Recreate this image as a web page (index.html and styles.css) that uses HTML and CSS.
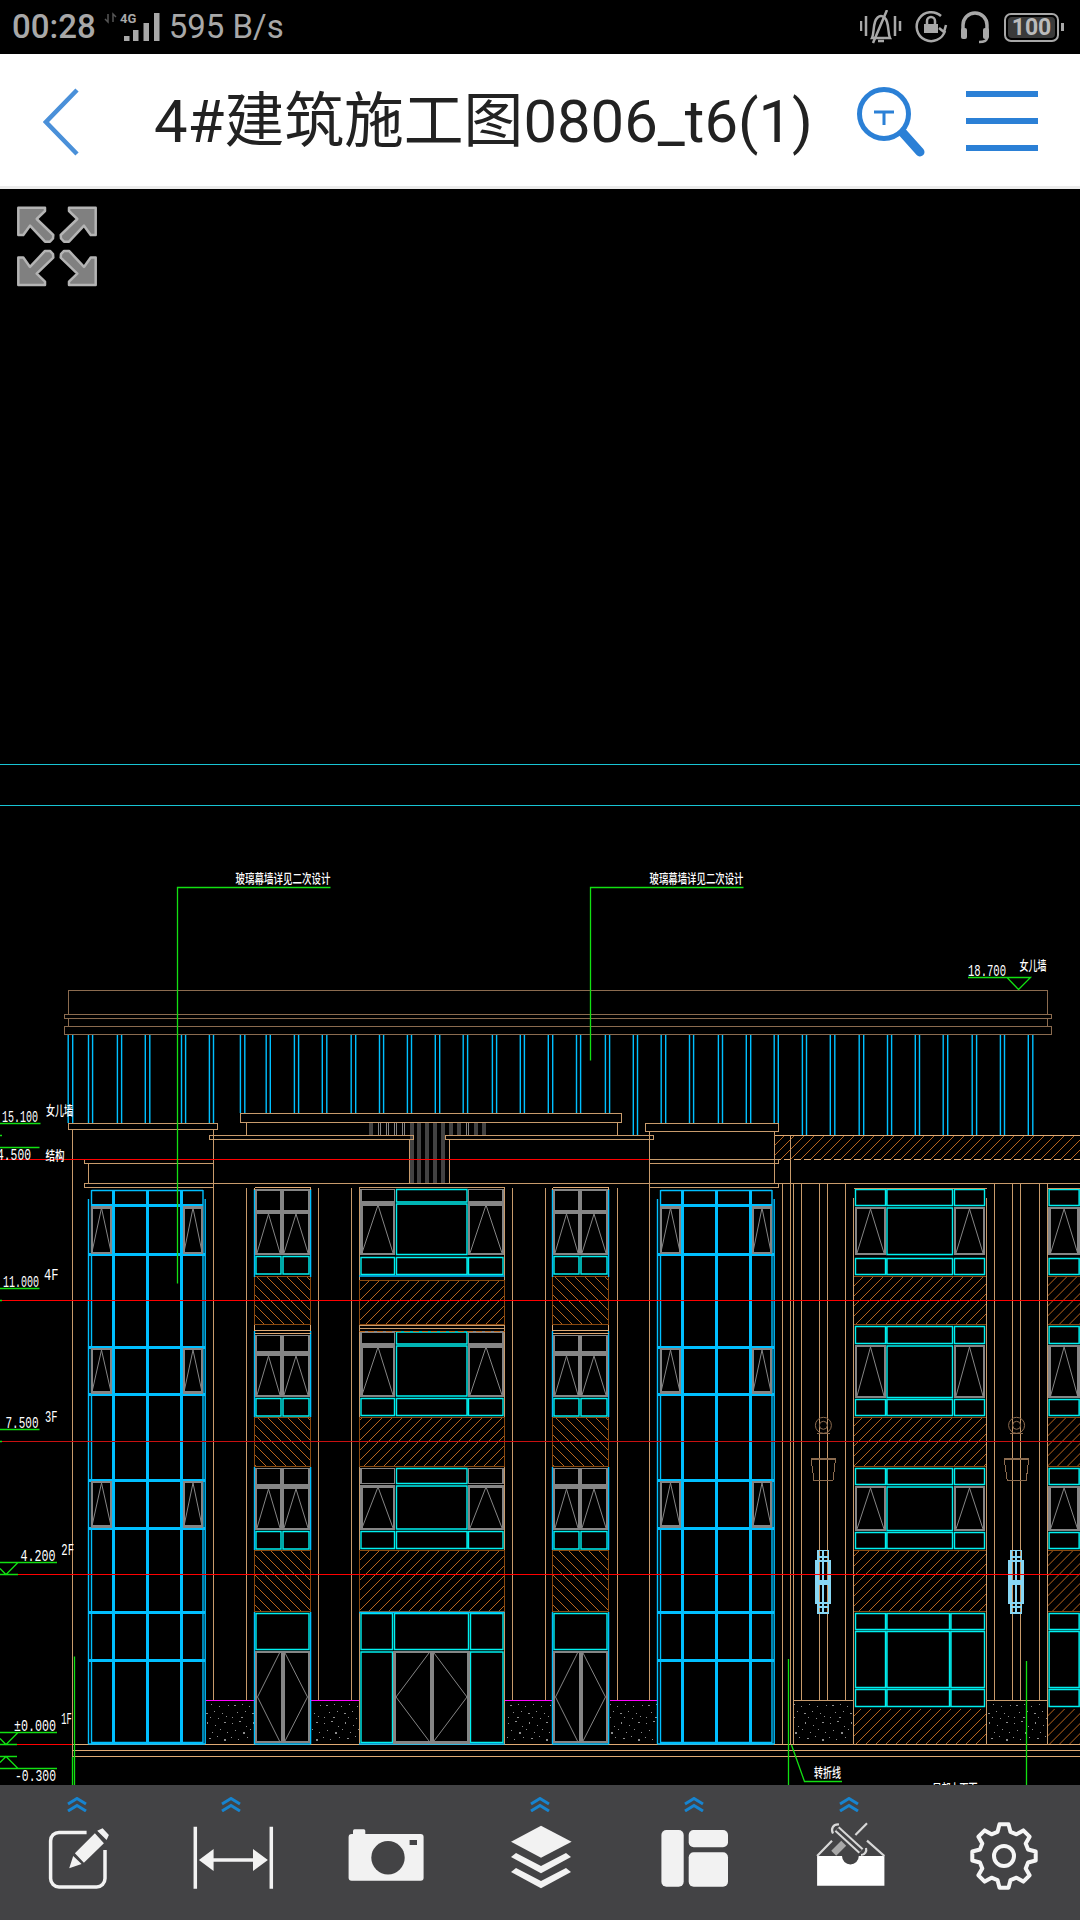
FILE: index.html
```html
<!DOCTYPE html>
<html>
<head>
	<meta charset="utf-8">
	<meta name="viewport" content="width=device-width, initial-scale=1">
	<title>CAD Viewer</title>
	<link rel="stylesheet" href="styles.css">
</head>
<body>
<div class="screen">

	<div class="status-bar">
		<span class="time">00:28</span>
		<svg class="signal" width="56" height="30" viewBox="0 0 56 30">
			<path class="dim" d="M4 2V10L1 7M9 10V2L12 5"/>
			<text x="16" y="11">4G</text>
			<rect x="20" y="24" width="5.5" height="5"/>
			<rect x="29" y="18" width="5.5" height="11"/>
			<rect x="39.5" y="11" width="5.5" height="18"/>
			<rect x="50" y="1" width="5.5" height="28"/>
		</svg>
		<span class="speed">595 B/s</span>
		<div class="status-icons">
			<svg class="s-icon" width="42" height="34" viewBox="0 0 42 34">
				<path d="M1 11V21M6 6V26M35 6V26M40 11V21"/>
				<path d="M12 28C14 24 13 18 15 12C16 8 19 6 21 6C23 6 26 8 27 12C29 18 28 24 30 28Z"/>
				<path d="M27 0L13 33M18 31H24"/>
			</svg>
			<svg class="s-icon" width="34" height="34" viewBox="0 0 34 34">
				<path d="M27 6A14.5 14.5 0 1 0 31 21"/>
				<path d="M32 15L30 22L25 18"/>
				<rect class="solid" x="10" y="14" width="14" height="9"/>
				<path d="M13 14V11A4 4 0 0 1 21 11V14"/>
			</svg>
			<svg class="s-icon" width="30" height="34" viewBox="0 0 30 34">
				<path class="thick" d="M3 20V15A12 12 0 0 1 27 15V20"/>
				<rect class="solid" x="1" y="18" width="6" height="11" rx="2"/>
				<rect class="solid" x="23" y="18" width="6" height="11" rx="2"/>
				<path d="M27 28Q27 32 19 32"/>
			</svg>
			<div class="battery">
				<div class="battery-body"><span>100</span></div>
				<div class="battery-nub"></div>
			</div>
		</div>
	</div>

	<div class="title-bar">
		<svg class="back" width="36" height="68" viewBox="0 0 36 68">
			<path d="M34 2L3 34L34 66"/>
		</svg>
		<p class="title">4#建筑施工图0806_t6(1)</p>
		<svg class="search" width="70" height="72" viewBox="0 0 70 72">
			<circle cx="28" cy="28" r="24.5"/>
			<path class="t" d="M18 26H38M28 26V39"/>
			<path class="handle" d="M47 47L64 66"/>
		</svg>
		<div class="menu"><span></span><span></span><span></span></div>
	</div>

	<div class="drawing">
		<svg class="cad" width="1080" height="1596" viewBox="0 189 1080 1596">
			<defs>
				<pattern id="hatch-f" width="10" height="10" patternUnits="userSpaceOnUse">
					<path d="M0 10L10 0" stroke="#b8641c"/>
				</pattern>
				<pattern id="hatch-b" width="10" height="10" patternUnits="userSpaceOnUse">
					<path d="M0 0L10 10" stroke="#b8641c"/>
				</pattern>
				<pattern id="concrete" width="46" height="40" patternUnits="userSpaceOnUse">
					<path class="speck" d="M2 3h1v1h-1zM9 1h2v1h-2zM16 6h1v1h-1zM23 2h1v2h-1zM31 5h1v1h-1zM40 2h2v1h-2zM5 10h1v1h-1zM13 12h2v2h-2zM20 9h1v1h-1zM28 12h1v1h-1zM36 9h1v1h-1zM43 12h1v1h-1zM1 17h1v1h-1zM8 19h1v1h-1zM17 17h1v1h-1zM25 18h2v1h-2zM33 16h1v1h-1zM40 19h2v2h-2zM4 25h2v1h-2zM12 24h1v1h-1zM19 26h1v1h-1zM27 24h1v1h-1zM35 26h1v1h-1zM44 25h1v1h-1zM7 32h1v1h-1zM15 31h1v1h-1zM22 33h2v1h-2zM30 31h1v1h-1zM38 33h1v1h-1zM2 37h1v1h-1zM11 37h2v1h-2zM26 37h1v1h-1zM34 38h1v1h-1zM42 36h1v1h-1z"/>
				</pattern>

				<!-- curtain wall, left one is the base, right one is moved by 569 -->
				<g id="curtain">
					<path class="blue-thin" d="M88.5 1199V1744M91.5 1190V1744M203 1190V1744M205.2 1199V1744M91.5 1190.5H203M91.5 1742.5H203M88.5 1744H205"/>
					<path class="blue-thick" d="M113.3 1190V1744M147.4 1190V1744M181.5 1190V1744M91 1205.5H203M89 1254.5H205M89 1347.5H205M89 1394.5H205M89 1480.5H205M89 1528H205M89 1612H205M89 1660.5H205"/>
					<path class="grey-thick" d="M92 1207.5H111V1253H92ZM184 1207.5H202V1253H184ZM92 1349H111V1392.5H92ZM184 1349H202V1392.5H184ZM92 1482H111V1526.5H92ZM184 1482H202V1526.5H184Z"/>
					<path class="grey-thin" d="M92 1252L101.5 1208L111 1252M184 1252L193 1208L202 1252M92 1392L101.5 1350L111 1392M184 1392L193 1350L202 1392M92 1526L101.5 1483L111 1526M184 1526L193 1483L202 1526"/>
				</g>

				<!-- narrow window, one floor, y as on 3F -->
				<g id="narrow">
					<path class="cyan" d="M256 1398.5H281V1416H256ZM283 1398.5H309V1416H283Z"/>
					<path class="grey-thick" d="M256 1354.5H281V1396H256ZM283 1354.5H309V1396H283Z"/>
					<path class="grey-thin" d="M257 1395L268.5 1356L280 1395M284 1395L296 1356L308 1395"/>
				</g>
				<g id="narrow-col">
					<rect class="brown" x="254.5" y="1276.5" width="56" height="48" fill="url(#hatch-b)"/>
					<rect class="brown" x="254.5" y="1417.5" width="56" height="49" fill="url(#hatch-b)"/>
					<rect class="brown" x="254.5" y="1550.5" width="56" height="61" fill="url(#hatch-b)"/>
					<path class="blue-thin" d="M254.5 1189V1277M310.6 1189V1277M254.5 1331V1417M310.6 1331V1417M254.5 1467V1550M310.6 1467V1550M254.5 1612V1744M310.6 1612V1744M254.5 1744H310.6"/>
					<path class="grey-mid" d="M256 1190H281V1211H256ZM283 1190H309V1211H283ZM256 1335.5H281V1352H256ZM283 1335.5H309V1352H283ZM256 1468.5H281V1485H256ZM283 1468.5H309V1485H283Z"/>
					<use href="#narrow" y="-142"/>
					<use href="#narrow"/>
					<use href="#narrow" y="133"/>
					<path class="cyan" d="M256 1613.5H309V1649.5H256Z"/>
					<path class="grey-thick" d="M283.5 1652H309V1742H283.5Z"/>
					<path class="grey-mid" d="M256 1652H281.5V1742H256Z"/>
					<path class="grey-thin" d="M279.5 1653L257.5 1697L279.5 1741M285 1653L307.5 1697L285 1741"/>
					<path class="tan-lt" d="M254.5 1187.5H310.6V1190M254.5 1187.5V1190M254.5 1325V1330H310.6V1325M254.5 1333H310.6"/>
				</g>

				<!-- wide window on the right side of the building -->
				<g id="wide-right">
					<rect class="brown" x="853.5" y="1276.5" width="133" height="48" fill="url(#hatch-f)"/>
					<rect class="brown" x="853.5" y="1417.5" width="133" height="49" fill="url(#hatch-f)"/>
					<rect class="brown" x="853.5" y="1550.5" width="133" height="61" fill="url(#hatch-f)"/>
					<rect x="853.5" y="1708.5" width="133" height="35.5" fill="url(#hatch-f)"/>
					<path class="cyan" d="M855.5 1189.5H885.5V1205.5H855.5ZM887 1189.5H952.5V1205.5H887ZM954.5 1189.5H984.5V1205.5H954.5ZM887 1208V1254.5H952.5V1208ZM855.5 1258.5H885.5V1274.5H855.5ZM887 1258.5H952.5V1274.5H887ZM954.5 1258.5H984.5V1274.5H954.5Z"/>
					<path class="cyan" d="M855.5 1326.5H885.5V1343.5H855.5ZM887 1326.5H952.5V1343.5H887ZM954.5 1326.5H984.5V1343.5H954.5ZM887 1346H952.5V1397.5H887ZM855.5 1399.5H885.5V1415.5H855.5ZM887 1399.5H952.5V1415.5H887ZM954.5 1399.5H984.5V1415.5H954.5Z"/>
					<path class="cyan" d="M855.5 1468.5H885.5V1484.5H855.5ZM887 1468.5H952.5V1484.5H887ZM954.5 1468.5H984.5V1484.5H954.5ZM887 1487H952.5V1530.5H887ZM855.5 1532.5H885.5V1548.5H855.5ZM887 1532.5H952.5V1548.5H887ZM954.5 1532.5H984.5V1548.5H954.5Z"/>
					<path class="cyan" d="M855.5 1613.5H885.5V1629.5H855.5ZM887 1613.5H949.5V1629.5H887ZM951 1613.5H984.5V1629.5H951ZM855.5 1631.5H885.5V1687.5H855.5ZM887 1631.5H949.5V1687.5H887ZM951 1631.5H984.5V1687.5H951ZM855.5 1689.5H885.5V1706.5H855.5ZM887 1689.5H949.5V1706.5H887ZM951 1689.5H984.5V1706.5H951Z"/>
					<path class="grey-thick" d="M856 1208H885V1254H856ZM955 1208H984V1254H955ZM856 1346H885V1397H856ZM955 1346H984V1397H955ZM856 1487H885V1530H856ZM955 1487H984V1530H955Z"/>
					<path class="grey-thin" d="M857 1253L870.5 1209L884 1253M956 1253L969.5 1209L983 1253M857 1396L870.5 1347L884 1396M956 1396L969.5 1347L983 1396M857 1529L870.5 1488L884 1529M956 1529L969.5 1488L983 1529"/>
					<path class="tan" d="M853.5 1198V1745M986.5 1198V1745M853.5 1188.5H986.5"/>
				</g>

				<g id="wall-lamp">
					<circle class="brown-l" cx="823.4" cy="1425.3" r="8"/>
					<circle class="brown-l" cx="823.4" cy="1425.3" r="4"/>
					<path class="brown-l" d="M817 1433.5H830"/>
					<path class="brown-l thick-l" d="M810.5 1459H836"/>
					<path class="brown-l" d="M811 1459L814 1480.5H833L835.5 1459"/>
				</g>
				<g id="lantern">
					<path class="lantern" d="M818 1550.5H828.5V1613H818ZM818 1557H828.5M823 1550V1613M816 1561H830V1603H816ZM818 1607H828.5"/>
					<rect x="815.5" y="1579.5" width="15" height="5.5" fill="#87d7f5"/>
				</g>
			</defs>

			<!-- hatching under the right half of the roof -->
			<rect x="774" y="1135.5" width="310" height="24" fill="url(#hatch-f)"/>
			<path class="tan-lt" d="M774 1135.5H1080"/>
			<path class="tan-lt" stroke-dasharray="7 3" d="M774 1159.5H1080"/>

			<!-- glass strips above the cornice -->
			<path class="blue-thin" d="M68.2 1034V1123M72.7 1034V1123M88.5 1034V1123M92.6 1034V1123M117.4 1034V1123M121.6 1034V1123M145.3 1034V1123M149.8 1034V1123M181.5 1034V1123M185.6 1034V1123M209.4 1034V1123M213.5 1034V1123M240.4 1034V1113M244.8 1034V1113M266.2 1034V1113M270.3 1034V1113M294.4 1034V1113M298.6 1034V1113M322.3 1034V1113M326.8 1034V1113M351.2 1034V1113M355.7 1034V1113M379.5 1034V1113M383.6 1034V1113M407.4 1034V1113M411.5 1034V1113M435.3 1034V1113M439.7 1034V1113M463.2 1034V1113M467.6 1034V1113M492.4 1034V1113M496.6 1034V1113M520.3 1034V1113M524.4 1034V1113M548.3 1034V1113M552.7 1034V1113M576.5 1034V1113M580.6 1034V1113M605.4 1034V1113M609.6 1034V1113M633.3 1034V1135M637.5 1034V1135M661.2 1034V1123M665.7 1034V1123M689.5 1034V1123M693.6 1034V1123M718.4 1034V1123M722.5 1034V1123M746.3 1034V1123M750.7 1034V1123M774.2 1034V1123M778.3 1034V1123M802.4 1034V1135M806.5 1034V1135M830.3 1034V1135M834.8 1034V1135M859.2 1034V1135M863.7 1034V1135M887.5 1034V1135M891.6 1034V1135M915.3 1034V1135M919.5 1034V1135M943.2 1034V1135M947.7 1034V1135M972.2 1034V1135M976.6 1034V1135M1000.4 1034V1135M1004.5 1034V1135M1028.3 1034V1135M1032.8 1034V1135"/>

			<!-- parapet and cornice -->
			<path class="brown-l" d="M68.5 1014V990.5H1047.5V1014M64.5 1014H1051.5V1018.5H64.5ZM68.5 1018.5V1026.5M1047.5 1018.5V1026.5M64.5 1026.5H1051.5V1034.5H64.5Z"/>

			<!-- centre grille -->
			<path class="grey-thin" d="M370 1122V1135M372 1122V1135M378.5 1122V1135M380.5 1122V1135M386.5 1122V1135M388.5 1122V1135M394.5 1122V1135M396.5 1122V1135M402.5 1122V1135M404.5 1122V1135M411 1122V1183M413 1122V1183M418 1122V1183M420 1122V1183M426 1122V1183M428 1122V1183M434 1122V1183M436 1122V1183M442 1122V1183M444 1122V1183M450 1122V1135M452 1122V1135M458 1122V1135M460 1122V1135M466.5 1122V1135M468.5 1122V1135M475 1122V1135M477 1122V1135M483 1122V1135M485 1122V1135"/>

			<!-- main lines of the elevation -->
			<path class="tan" d="M68.5 1123.5H217.5V1129.5H68.5ZM240.5 1113.5H621.5V1122H240.5ZM246.5 1122V1135M617.5 1122V1135M209.5 1135.5H413.5V1139.5H209.5ZM445 1135.5H653.5V1139.5H445ZM409.5 1139.5V1183.5M449.5 1139.5V1183.5M645.5 1123.5H778.5V1131.5H645.5ZM84.5 1159.5H213V1163.5H84.5ZM88.5 1163.5V1183.5M84.5 1183.5H213V1187.5H84.5ZM213 1183.5H1080M649.5 1159.5H778.5V1163.5H649.5ZM649.5 1187.5H778.5V1183.5M649.5 1131.5V1700M774.5 1131.5V1183.5M790.5 1135.5V1183.5"/>
			<path class="tan" d="M72.5 1129.5V1757M213.5 1129.5V1700.5M246.5 1188V1700.5M318.5 1188V1700.5M351.5 1188V1700.5M359.5 1188V1745M504.5 1188V1745M512.5 1188V1700.5M545.5 1188V1700.5M617.5 1188V1700.5M782.5 1183.5V1744M790.5 1183.5V1744M793.5 1183.5V1744M801.5 1183.5V1700.5M819.5 1183.5V1700.5M827.5 1183.5V1700.5M845.5 1183.5V1700.5M994.5 1183.5V1700.5M1012.5 1183.5V1700.5M1020.5 1183.5V1700.5M1039.5 1183.5V1700.5M793.5 1700.5H853.5M986.5 1700.5H1047M1047.5 1183.5V1744"/>
			<path class="tan-lt" d="M72.5 1744.5H1080M72.5 1750.5H1080M72.5 1756.5H1080"/>

			<!-- stone base -->
			<rect x="206" y="1701" width="48.5" height="43" fill="url(#concrete)"/>
			<rect x="311.5" y="1701" width="48" height="43" fill="url(#concrete)"/>
			<rect x="505" y="1701" width="47.5" height="43" fill="url(#concrete)"/>
			<rect x="610" y="1701" width="47" height="43" fill="url(#concrete)"/>
			<rect x="794" y="1701" width="60" height="43" fill="url(#concrete)"/>
			<rect x="987" y="1701" width="60" height="43" fill="url(#concrete)"/>
			<path class="magenta" d="M206 1700.5H254.5M311 1700.5H359M505 1700.5H552.5M610 1700.5H657"/>

			<use href="#curtain"/>
			<use href="#curtain" x="569"/>
			<use href="#narrow-col"/>
			<use href="#narrow-col" x="298"/>

			<!-- wide window left of centre -->
			<rect class="brown" x="359.5" y="1280.5" width="145" height="44" fill="url(#hatch-f)"/>
			<rect class="brown" x="359.5" y="1417.5" width="145" height="49" fill="url(#hatch-f)"/>
			<rect class="brown" x="359.5" y="1550.5" width="145" height="61" fill="url(#hatch-f)"/>
			<path class="cyan" d="M396.5 1189.5H467V1202H396.5ZM396.5 1204V1254.5H467V1204ZM361 1257.5H394.5V1274.5H361ZM396.5 1257.5H467V1274.5H396.5ZM468.5 1257.5H503V1274.5H468.5ZM396.5 1332H467V1344H396.5ZM396.5 1346H467V1396H396.5ZM361 1398.5H394.5V1415.5H361ZM396.5 1398.5H467V1415.5H396.5ZM468.5 1398.5H503V1415.5H468.5ZM396.5 1468.5H467V1483.5H396.5ZM396.5 1486H467V1529H396.5ZM361 1531.5H394.5V1548.5H361ZM396.5 1531.5H467V1548.5H396.5ZM468.5 1531.5H503V1548.5H468.5ZM361 1613.5H392.5V1649.5H361ZM394.5 1613.5H468.5V1649.5H394.5ZM470.5 1613.5H503V1649.5H470.5ZM361 1652H392.5V1742.5H361ZM470.5 1652H503V1742.5H470.5Z"/>
			<path class="blue-thin" d="M359 1744H504.5M359 1276H504.5M359 1612.5H504.5"/>
			<path class="grey-mid" d="M361 1189.5H394.5V1202H361ZM468.5 1189.5H503V1202H468.5ZM361 1332H394.5V1344H361ZM468.5 1332H503V1344H468.5ZM361 1468.5H394.5V1483.5H361ZM468.5 1468.5H503V1483.5H468.5Z"/>
			<path class="grey-thick" d="M361.5 1204.5H394V1254H361.5ZM469 1204.5H503V1254H469ZM361.5 1346.5H394V1396H361.5ZM469 1346.5H503V1396H469ZM361.5 1486.5H394V1529H361.5ZM469 1486.5H503V1529H469ZM394.5 1652H431V1742.5H394.5ZM432.5 1652H468.5V1742.5H432.5Z"/>
			<path class="grey-thin" d="M362 1253L378 1205L393 1253M470 1253L486 1205L502 1253M362 1395L378 1347L393 1395M470 1395L486 1347L502 1395M362 1528L378 1487L393 1528M470 1528L486 1487L502 1528M429 1653L396 1697L429 1741M434 1653L467 1697L434 1741"/>
			<path class="tan" d="M359 1325.5H504.5M359 1328.5H504.5M359 1187.5H504.5"/>
			<path class="orange" stroke-dasharray="6 3" d="M359 1331H504.5"/>

			<use href="#wide-right"/>
			<use href="#wide-right" x="193.6"/>

			<use href="#wall-lamp"/>
			<use href="#wall-lamp" x="193.2"/>
			<use href="#lantern"/>
			<use href="#lantern" x="193.2"/>

			<!-- axis lines -->
			<path class="aqua" d="M0 764.5H1080M0 805.5H1080"/>
			<path class="red" d="M0 1159.5H649M0 1300.5H1080M0 1574.5H1080M0 1744.5H72"/>
			<path class="red-dim" d="M0 1441.5H1080"/>

			<!-- leaders and level marks -->
			<path class="green" d="M177.5 1283.5V887.5H330.5M590.5 1060.5V887.5H743.5"/>
			<path class="green" d="M968 977.5H1030.5L1018.5 989.5L1007 977.5"/>
			<path class="green" d="M0 1123.5H40.5M0 1135.5H2M0 1147.5H39.5M0 1288.5H39.5M0 1300.5H2M0 1429.5H39.5M0 1441.5H2"/>
			<path class="green" d="M0 1562.5H57M18 1562.5L6 1574.5L0 1568.5M0 1574.5H18"/>
			<path class="green" d="M0 1732.5H57M18 1732.5L6 1744.5L0 1738.5M0 1744.5H17"/>
			<path class="green" d="M0 1768.5H57M18 1768.5L6 1756.5L0 1762.5M0 1756.5H17"/>
			<path class="green" d="M74.5 1656.5V1785M72.5 1757V1785M788.5 1659V1785M1026.5 1661V1785M791.5 1745L804.5 1781.5H842"/>

			<!-- notes and levels -->
			<text class="note" x="235.5" y="883" textLength="95" lengthAdjust="spacingAndGlyphs">玻璃幕墙详见二次设计</text>
			<text class="note" x="649.5" y="883" textLength="94" lengthAdjust="spacingAndGlyphs">玻璃幕墙详见二次设计</text>
			<text class="note" x="1019.5" y="969.5" textLength="27" lengthAdjust="spacingAndGlyphs">女儿墙</text>
			<text class="note" x="46" y="1114.5" textLength="27" lengthAdjust="spacingAndGlyphs">女儿墙</text>
			<text class="note" x="45.5" y="1159.5" textLength="19" lengthAdjust="spacingAndGlyphs">结构</text>
			<text class="note" x="814" y="1776.5" textLength="27" lengthAdjust="spacingAndGlyphs">转折线</text>
			<text class="note" x="932.5" y="1793" textLength="45" lengthAdjust="spacingAndGlyphs">局部上下面</text>

			<text class="level" x="968" y="976" textLength="38" lengthAdjust="spacingAndGlyphs">18.700</text>
			<text class="level" x="2" y="1121.5" textLength="36" lengthAdjust="spacingAndGlyphs">15.100</text>
			<text class="level" x="-3" y="1160" textLength="34" lengthAdjust="spacingAndGlyphs">4.500</text>
			<text class="level" x="3" y="1287" textLength="36" lengthAdjust="spacingAndGlyphs">11.000</text>
			<text class="level" x="5.5" y="1428" textLength="33" lengthAdjust="spacingAndGlyphs">7.500</text>
			<text class="level" x="20.5" y="1560.5" textLength="35" lengthAdjust="spacingAndGlyphs">4.200</text>
			<text class="level" x="14" y="1731" textLength="42" lengthAdjust="spacingAndGlyphs">±0.000</text>
			<text class="level" x="15" y="1780.5" textLength="41" lengthAdjust="spacingAndGlyphs">-0.300</text>
			<text class="level" x="44" y="1280" textLength="14.5" lengthAdjust="spacingAndGlyphs">4F</text>
			<text class="level" x="45" y="1421.5" textLength="12.5" lengthAdjust="spacingAndGlyphs">3F</text>
			<text class="level" x="61.3" y="1555" textLength="12.7" lengthAdjust="spacingAndGlyphs">2F</text>
			<text class="level" x="61.3" y="1724" textLength="10.5" lengthAdjust="spacingAndGlyphs">1F</text>
		</svg>

		<svg class="expand" width="82" height="82" viewBox="0 0 82 82">
			<g id="corner">
				<path d="M2.3 1.7H29V5L20.7 13L37.3 29L37 32.5L34 35.7H29L14 19.7L7.3 29H2.3Z"/>
			</g>
			<use href="#corner" transform="translate(82 0) scale(-1 1)"/>
			<use href="#corner" transform="translate(0 80.6) scale(1 -1)"/>
			<use href="#corner" transform="translate(82 80.6) scale(-1 -1)"/>
		</svg>
	</div>

	<div class="toolbar">
		<div class="tool">
			<svg class="more" width="20" height="15" viewBox="0 0 20 15"><path d="M1 7L10 1.5L19 7M1 14L10 8.5L19 14"/></svg>
			<svg class="tool-icon" width="90" height="70" viewBox="-5 0 90 70">
				<path class="line" d="M49.6 8.4H22A8.4 8.4 0 0 0 13.6 16.8V54.6A8.4 8.4 0 0 0 22 63H59.6A8.4 8.4 0 0 0 68 54.6V26"/>
				<path d="M32.2 44.3L36.2 32L44.6 40ZM37.9 29.3L57.9 9.3L66.9 19.3L46.9 38.7ZM60.2 6.7L65.6 4.3L71.9 11L69.6 16Z"/>
			</svg>
		</div>
		<div class="tool">
			<svg class="more" width="20" height="15" viewBox="0 0 20 15"><path d="M1 7L10 1.5L19 7M1 14L10 8.5L19 14"/></svg>
			<svg class="tool-icon" width="90" height="70" viewBox="-5 0 90 70">
				<path class="line" d="M4.3 2.7V64.7M80.3 2.7V64.7"/>
				<path d="M7.9 36L22.6 25V34.2H62V25L76.9 36L62 47V37.8H22.6V47Z"/>
			</svg>
		</div>
		<div class="tool">
			<svg class="more hidden" width="20" height="15" viewBox="0 0 20 15"></svg>
			<svg class="tool-icon" width="90" height="70" viewBox="-5 0 90 70">
				<rect x="7" y="5.3" width="12.3" height="7" rx="1.5"/>
				<rect x="2.6" y="10" width="75" height="46.7" rx="3"/>
				<circle class="cut" cx="42" cy="33.7" r="16.7"/>
				<rect class="cut" x="63.6" y="16" width="7.4" height="5"/>
			</svg>
		</div>
		<div class="tool">
			<svg class="more" width="20" height="15" viewBox="0 0 20 15"><path d="M1 7L10 1.5L19 7M1 14L10 8.5L19 14"/></svg>
			<svg class="tool-icon" width="90" height="70" viewBox="-5 0 90 70">
				<path d="M41 1.7L71.6 17.7L41 33.7L11 17.7Z"/>
				<path d="M11 33L16 29L41 42L66 29L71 33L41 49.3Z"/>
				<path d="M11 48L16 44L41 57L66 44L71 48L41 64.3Z"/>
			</svg>
		</div>
		<div class="tool">
			<svg class="more" width="20" height="15" viewBox="0 0 20 15"><path d="M1 7L10 1.5L19 7M1 14L10 8.5L19 14"/></svg>
			<svg class="tool-icon" width="90" height="70" viewBox="-5 0 90 70">
				<rect x="7.4" y="6" width="22.3" height="56.7" rx="5"/>
				<rect x="34.7" y="6" width="39.3" height="17.3" rx="5"/>
				<rect x="34.7" y="28.3" width="39.3" height="34.4" rx="5"/>
			</svg>
		</div>
		<div class="tool">
			<svg class="more" width="20" height="15" viewBox="0 0 20 15"><path d="M1 7L10 1.5L19 7M1 14L10 8.5L19 14"/></svg>
			<svg class="tool-icon" width="90" height="70" viewBox="-5 0 90 70">
				<path class="white" d="M8.1 32H33A8.4 8.4 0 0 0 49.8 32H75.4V61.7H8.1Z"/>
				<path class="thin" d="M8.1 32L23 16.7M58 16.7L75.4 32"/>
				<path class="thin" d="M58 -0.7L46.4 11"/>
				<path class="grip" d="M24.7 29.3L34.7 19.3"/>
				<path class="wrench" d="M28 5L52 27"/>
				<path class="wrench-in" d="M28 5L52 27"/>
				<path class="thin" d="M30 0.5C24 0 21.5 5 24 9.5M52 31C56 31 58 27 57 24"/>
			</svg>
		</div>
		<div class="tool">
			<svg class="more hidden" width="20" height="15" viewBox="0 0 20 15"></svg>
			<svg class="tool-icon" width="90" height="70" viewBox="-5 0 90 70">
				<g class="gear" transform="translate(41 32)">
					<path d="M24.1 -6.5L31.7 -4.5V4.5L24.1 6.5L21.7 12.5L25.6 19.3L19.3 25.6L12.5 21.7L6.5 24.1L4.5 31.7H-4.5L-6.5 24.1L-12.5 21.7L-19.3 25.6L-25.6 19.3L-21.7 12.5L-24.1 6.5L-31.7 4.5V-4.5L-24.1 -6.5L-21.7 -12.5L-25.6 -19.3L-19.3 -25.6L-12.5 -21.7L-6.5 -24.1L-4.5 -31.7H4.5L6.5 -24.1L12.5 -21.7L19.3 -25.6L25.6 -19.3L21.7 -12.5Z"/>
					<circle r="10"/>
				</g>
			</svg>
		</div>
	</div>

</div>
</body>
</html>
```

FILE: styles.css
```css
*{
    margin:0;
    padding:0;
    box-sizing: border-box;
}
body{
    background: #000;
    font-family: Roboto, "Noto Sans CJK SC", sans-serif;
}
.screen{
    width: 1080px;
    height: 1920px;
    display: flex;
    flex-direction: column;
    overflow: hidden;
}

/* status bar */
.status-bar{
    height: 54px;
    background: #000;
    color: #a8a8a8;
    display: flex;
    align-items: center;
    padding-left: 12px;
    padding-right: 16px;
}
.time{
    font-size: 33px;
    font-weight: 500;
    line-height: 54px;
}
.signal{
    margin-left: 8px;
}
.signal rect{
    fill: #a8a8a8;
}
.signal text{
    font-size: 13px;
    font-weight: 700;
    fill: #a8a8a8;
}
.signal .dim{
    fill: none;
    stroke: #555;
    stroke-width: 1.5;
}
.speed{
    font-size: 33px;
    line-height: 54px;
    margin-left: 9px;
}
.status-icons{
    margin-left: auto;
    display: flex;
    align-items: center;
    gap: 12px;
}
.s-icon path{
    fill: none;
    stroke: #a8a8a8;
    stroke-width: 2.5;
}
.s-icon .thick{
    stroke-width: 3.5;
}
.s-icon .solid{
    fill: #a8a8a8;
}
.battery{
    display: flex;
    align-items: center;
    gap: 2px;
    margin-left: 2px;
}
.battery-body{
    width: 55px;
    height: 29px;
    border: 2px solid #a8a8a8;
    border-radius: 7px;
    padding: 2px;
}
.battery-body span{
    display: block;
    height: 21px;
    background: #3a3a3a;
    border-radius: 4px;
    color: #bbb;
    font-size: 23px;
    font-weight: 700;
    line-height: 21px;
    text-align: center;
}
.battery-nub{
    width: 3px;
    height: 8px;
    background: #a8a8a8;
}

/* title bar */
.title-bar{
    height: 135px;
    background: #fff;
    border-bottom: 3px solid #ececec;
    display: flex;
    align-items: center;
    padding-top: 4px;
    padding-left: 43px;
    padding-right: 42px;
}
.back path{
    fill: none;
    stroke: #4a90d9;
    stroke-width: 4.5;
}
.title{
    margin-left: 75px;
    font-size: 59.8px;
    line-height: 80px;
    color: #222;
    white-space: nowrap;
}
.search{
    margin-left: auto;
}
.search circle{
    fill: none;
    stroke: #2b80d6;
    stroke-width: 5;
}
.search .t{
    fill: none;
    stroke: #2b80d6;
    stroke-width: 3;
}
.search .handle{
    fill: none;
    stroke: #2b80d6;
    stroke-width: 9;
    stroke-linecap: round;
}
.menu{
    width: 72px;
    margin-left: 40px;
    margin-top: -2px;
    display: flex;
    flex-direction: column;
    gap: 21px;
}
.menu span{
    height: 6px;
    background: #2b80d6;
}

/* drawing */
.drawing{
    flex: 1;
    position: relative;
    background: #000;
    overflow: hidden;
}
.cad{
    display: block;
}
.cad path, .cad circle{
    fill: none;
}
.cad path, .cad rect{
    shape-rendering: crispEdges;
    stroke-width: 1;
}
.cad .speck{ fill: #8c8c8c; }
.tan{ stroke: #c89b6c; }
.tan-lt{ stroke: #e0aa74; }
.brown-l{ stroke: #8b6b4f; }
.cad .thick-l{ stroke-width: 2; }
.cad .brown{ stroke: #8a4a10; }
.orange{ stroke: #c06a1e; }
.cad .cyan{ stroke: #00f0f0; stroke-width: 1.4; shape-rendering: auto; }
.cad .blue-thin{ stroke: #00bfff; stroke-width: 1.4; shape-rendering: auto; }
.cad .blue-thick{ stroke: #00bfff; stroke-width: 3; }
.cad .grey-thin{ stroke: #858585; shape-rendering: auto; }
.cad .grey-mid{ stroke: #858585; stroke-width: 1.5; }
.cad .grey-thick{ stroke: #858585; stroke-width: 2.5; }
.cad .lantern{ stroke: #87d7f5; stroke-width: 1.5; }
.cad .magenta{ stroke: #ff00ff; stroke-width: 1.5; }
.aqua{ stroke: #18c4d4; }
.red{ stroke: #ff0000; }
.red-dim{ stroke: #c81010; }
.cad .green{ stroke: #12e012; stroke-width: 1.3; shape-rendering: auto; }
.note{
    font-family: "Noto Sans CJK SC", sans-serif;
    font-size: 13px;
    font-weight: 500;
    fill: #fff;
}
.level{
    font-family: "Liberation Mono", monospace;
    font-size: 17px;
    fill: #fff;
}
.expand{
    position: absolute;
    left: 16px;
    top: 17px;
}
.expand path{
    fill: #808080;
    stroke: #b4b4b4;
    stroke-width: 2.5;
    stroke-linejoin: round;
}

/* bottom toolbar */
.toolbar{
    height: 135px;
    background: #434345;
    display: grid;
    grid-template-columns: repeat(7, 1fr);
    padding-top: 12px;
}
.tool{
    display: flex;
    flex-direction: column;
    align-items: center;
    gap: 12px;
}
.more path{
    fill: none;
    stroke: #1784cf;
    stroke-width: 3;
}
.tool-icon{
    overflow: visible;
}
.tool-icon path, .tool-icon rect, .tool-icon circle{
    fill: #f2f2f2;
}
.tool-icon .line{
    fill: none;
    stroke: #f2f2f2;
    stroke-width: 3.5;
}
.tool-icon .cut{
    fill: #434345;
}
.tool-icon .white{
    fill: #fff;
}
.tool-icon .thin{
    fill: none;
    stroke: #d8d8d8;
    stroke-width: 2.2;
}
.tool-icon .grip{
    fill: none;
    stroke: #a8a8a8;
    stroke-width: 7;
}
.tool-icon .wrench{
    fill: none;
    stroke: #d8d8d8;
    stroke-width: 7;
}
.tool-icon .wrench-in{
    fill: none;
    stroke: #434345;
    stroke-width: 3;
}
.tool-icon .gear path, .tool-icon .gear circle{
    fill: none;
    stroke: #f5f5f5;
    stroke-width: 4;
    stroke-linejoin: round;
}
```
